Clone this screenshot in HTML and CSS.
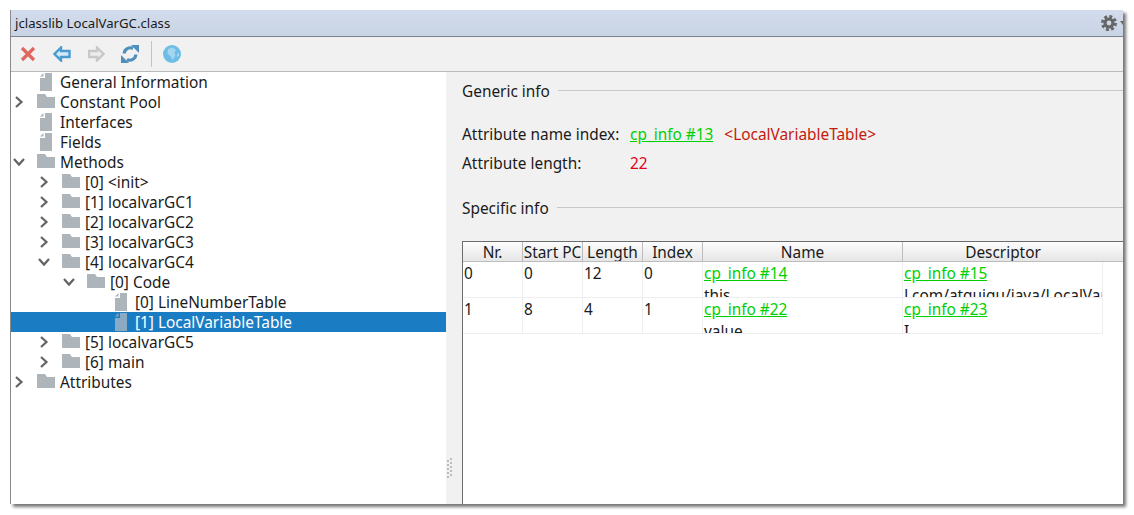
FILE: index.html
```html
<!DOCTYPE html>
<html lang="en">
<head>
    <meta charset="UTF-8">
    <title>jclasslib LocalVarGC.class</title>
    <link rel="stylesheet" href="styles.css">
</head>
<body>
    <svg class="defs" width="0" height="0">
        <symbol id="folder" viewBox="0 0 18 14"><path d="M0 0H8L10 3H18V14H0Z"/></symbol>
        <symbol id="file" viewBox="0 0 12 18"><path d="M5 0H12V18H0V5L5 5Z"/><path d="M0 3.5L3.5 0V3.5Z"/></symbol>
        <symbol id="closed" viewBox="0 0 10 14"><path d="M2 2L7.5 7L2 12" fill="none" stroke="#5f6366" stroke-width="2.2"/></symbol>
        <symbol id="open" viewBox="0 0 14 10"><path d="M2 2L7 7.5L12 2" fill="none" stroke="#5f6366" stroke-width="2.2"/></symbol>
    </svg>

    <div class="window">
        <div class="titlebar">
            <span>jclasslib LocalVarGC.class</span>
            <svg class="gear" width="16" height="16" viewBox="0 0 16 16">
                <circle cx="8" cy="8" r="4" fill="none" stroke="#666" stroke-width="3.2"/>
                <circle cx="8" cy="8" r="6.6" fill="none" stroke="#666" stroke-width="2.8" stroke-dasharray="3 2.2"/>
            </svg>
            <svg class="gear-arrow" width="3" height="5" viewBox="0 0 3 5"><path d="M0 0H3V4Z" fill="#666"/></svg>
        </div>

        <div class="toolbar">
            <svg width="16" height="16" viewBox="0 0 16 16"><path d="M2 2L14 14M14 2L2 14" stroke="#e0675d" stroke-width="3.2"/></svg>
            <svg class="tool-back" width="18" height="16" viewBox="0 0 18 16"><path d="M8 1.5L1.5 8L8 14.5V11H16.5V5H8Z" fill="#d4e8f5" stroke="#4a9bcf" stroke-width="2.4"/></svg>
            <svg class="tool-next" width="17" height="16" viewBox="0 0 17 16"><path d="M9 1.5L15.5 8L9 14.5V11H1V5H9Z" fill="#ececec" stroke="#c8c8c8" stroke-width="2.4"/></svg>
            <svg class="tool-reload" width="18" height="18" viewBox="0 0 18 18">
                <path d="M3.2 8.5A6 6 0 0 1 12 3.5M14.8 9.5A6 6 0 0 1 6 14.5" fill="none" stroke="#4f8fbc" stroke-width="3.2"/>
                <path d="M10 0H18V8ZM0 18V10L8 18Z" fill="#4f8fbc"/>
            </svg>
            <div class="tool-sep"></div>
            <svg width="18" height="18" viewBox="0 0 18 18">
                <circle cx="9" cy="9" r="9" fill="#6dbde6"/>
                <path d="M5 4L9 2.5L13 4.5L11.5 8L12.5 10.5L9.5 15L7.5 11L4.5 9ZM14 9L16 8L16 11L14 12Z" fill="#a3d6f0"/>
            </svg>
        </div>

        <div class="main">
            <div class="tree">
                <div class="row"><span class="twisty"></span><svg class="file"><use href="#file"/></svg>General Information</div>
                <div class="row"><svg class="twisty"><use href="#closed"/></svg><svg class="folder"><use href="#folder"/></svg>Constant Pool</div>
                <div class="row"><span class="twisty"></span><svg class="file"><use href="#file"/></svg>Interfaces</div>
                <div class="row"><span class="twisty"></span><svg class="file"><use href="#file"/></svg>Fields</div>
                <div class="row"><svg class="twisty twisty-open"><use href="#open"/></svg><svg class="folder"><use href="#folder"/></svg>Methods</div>
                <div class="row level1"><svg class="twisty"><use href="#closed"/></svg><svg class="folder"><use href="#folder"/></svg>[0] &lt;init&gt;</div>
                <div class="row level1"><svg class="twisty"><use href="#closed"/></svg><svg class="folder"><use href="#folder"/></svg>[1] localvarGC1</div>
                <div class="row level1"><svg class="twisty"><use href="#closed"/></svg><svg class="folder"><use href="#folder"/></svg>[2] localvarGC2</div>
                <div class="row level1"><svg class="twisty"><use href="#closed"/></svg><svg class="folder"><use href="#folder"/></svg>[3] localvarGC3</div>
                <div class="row level1"><svg class="twisty twisty-open"><use href="#open"/></svg><svg class="folder"><use href="#folder"/></svg>[4] localvarGC4</div>
                <div class="row level2"><svg class="twisty twisty-open"><use href="#open"/></svg><svg class="folder"><use href="#folder"/></svg>[0] Code</div>
                <div class="row level3"><span class="twisty"></span><svg class="file"><use href="#file"/></svg>[0] LineNumberTable</div>
                <div class="row level3 selected"><span class="twisty"></span><svg class="file"><use href="#file"/></svg>[1] LocalVariableTable</div>
                <div class="row level1"><svg class="twisty"><use href="#closed"/></svg><svg class="folder"><use href="#folder"/></svg>[5] localvarGC5</div>
                <div class="row level1"><svg class="twisty"><use href="#closed"/></svg><svg class="folder"><use href="#folder"/></svg>[6] main</div>
                <div class="row"><svg class="twisty"><use href="#closed"/></svg><svg class="folder"><use href="#folder"/></svg>Attributes</div>
            </div>

            <div class="splitter">
                <svg width="6" height="20" viewBox="0 0 6 20" fill="#bbb">
                    <rect x="0" y="2" width="2" height="2"/><rect x="0" y="6" width="2" height="2"/><rect x="0" y="10" width="2" height="2"/><rect x="0" y="14" width="2" height="2"/><rect x="0" y="18" width="2" height="2"/>
                    <rect x="3" y="0" width="2" height="2"/><rect x="3" y="4" width="2" height="2"/><rect x="3" y="8" width="2" height="2"/><rect x="3" y="12" width="2" height="2"/><rect x="3" y="16" width="2" height="2"/>
                </svg>
            </div>

            <div class="details">
                <div class="group-title group-generic"><span>Generic info</span><i></i></div>
                <div class="attr attr-name">
                    <span class="attr-label">Attribute name index:</span>
                    <a class="link" href="#">cp_info #13</a>
                    <span class="attr-ref">&lt;LocalVariableTable&gt;</span>
                </div>
                <div class="attr attr-length">
                    <span class="attr-label">Attribute length:</span>
                    <span class="attr-value">22</span>
                </div>
                <div class="group-title group-specific"><span>Specific info</span><i></i></div>

                <div class="table">
                    <div class="table-row table-head">
                        <div class="col-s">Nr.</div>
                        <div class="col-s">Start PC</div>
                        <div class="col-s">Length</div>
                        <div class="col-s">Index</div>
                        <div class="col-l">Name</div>
                        <div class="col-l col-last">Descriptor</div>
                    </div>
                    <div class="table-row">
                        <div class="col-s">0</div>
                        <div class="col-s">0</div>
                        <div class="col-s">12</div>
                        <div class="col-s">0</div>
                        <div class="col-l"><a class="link" href="#">cp_info #14</a><br>this</div>
                        <div class="col-l"><a class="link" href="#">cp_info #15</a><br>Lcom/atguigu/java/LocalVarGC;</div>
                    </div>
                    <div class="table-row">
                        <div class="col-s">1</div>
                        <div class="col-s">8</div>
                        <div class="col-s">4</div>
                        <div class="col-s">1</div>
                        <div class="col-l"><a class="link" href="#">cp_info #22</a><br>value</div>
                        <div class="col-l"><a class="link" href="#">cp_info #23</a><br>I</div>
                    </div>
                </div>
            </div>
        </div>
    </div>
</body>
</html>
```

FILE: styles.css
```css
* {
    box-sizing: border-box;
}

html, body {
    margin: 0;
    height: 515px;
    overflow: hidden;
    background-color: #fff;
}

body {
    padding: 10px 0 0 10px;
    font-family: "Noto Sans", "Open Sans", sans-serif;
    font-size: 15.4px;
    color: #1a1a1a;
}

.defs {
    position: absolute;
}

.window {
    width: 1113px;
    height: 494px;
    display: flex;
    flex-direction: column;
    border-left: 1px solid #8a8a8a;
    background-color: #f1f1f1;
    box-shadow: 3px 3px 3px #777;
}

.titlebar {
    height: 27px;
    flex: none;
    display: flex;
    align-items: center;
    padding-left: 4px;
    font-size: 13.2px;
    background: linear-gradient(#d2dcec, #c8d3e4);
    border-bottom: 1px solid #7c8494;
}

.gear {
    margin-left: auto;
}

.gear-arrow {
    margin-left: 3px;
}

.toolbar {
    height: 35px;
    flex: none;
    display: flex;
    align-items: center;
    padding-left: 9px;
    border-bottom: 1px solid #b9b9b9;
}

.tool-back {
    margin-left: 17px;
}

.tool-next {
    margin-left: 17px;
}

.tool-reload {
    margin-left: 16px;
}

.tool-sep {
    width: 1px;
    height: 26px;
    margin: 0 11px 0 12px;
    background-color: #c4c4c4;
}

.main {
    flex: 1;
    display: flex;
    min-height: 0;
}

.tree {
    width: 435px;
    flex: none;
    background-color: #fff;
}

.row {
    height: 20px;
    display: flex;
    align-items: center;
    white-space: nowrap;
    line-height: 20px;
    padding-top: 2px;
    padding-left: 3px;
}

.level1 {
    padding-left: 28px;
}

.level2 {
    padding-left: 53px;
}

.level3 {
    padding-left: 78px;
}

.twisty {
    width: 10px;
    height: 14px;
    margin-bottom: 2px;
    flex: none;
}

.twisty-open {
    width: 14px;
    height: 10px;
    margin: 0 -2px 2px;
}

.folder {
    width: 18px;
    height: 14px;
    margin: 0 5px 2px 13px;
    fill: #adb5ba;
    flex: none;
    transform: translateY(-1px);
}

.file {
    width: 12px;
    height: 18px;
    margin: 0 8px 2px 16px;
    fill: #adb5ba;
    flex: none;
}

.selected {
    background-color: #1a7dc4;
    color: #fff;
}

.selected .file {
    fill: #8aa9c2;
}

.splitter {
    width: 16px;
    flex: none;
    display: flex;
    align-items: flex-end;
    padding: 0 0 26px 1px;
}

.details {
    flex: 1;
    min-width: 0;
    display: flex;
    flex-direction: column;
}

.group-title {
    display: flex;
    align-items: center;
    height: 20px;
    gap: 8px;
}

.group-title i {
    flex: 1;
    height: 1px;
    margin-top: -2px;
    background-color: #c8c8c8;
}

.group-generic {
    margin-top: 9px;
}

.group-specific {
    margin-top: 25px;
}

.attr {
    display: flex;
    align-items: center;
    height: 20px;
}

.attr-name {
    margin-top: 23px;
}

.attr-length {
    margin-top: 9px;
}

.attr-label {
    width: 168px;
    flex: none;
}

.attr-ref {
    margin-left: 11px;
    color: #c41a0c;
}

.attr-value {
    color: #e0001a;
}

.link {
    color: #00d000;
    text-decoration: underline;
}

.table {
    margin-top: 23px;
    flex: 1;
    background-color: #fff;
    border-top: 1px solid #6c6c6c;
    border-left: 1px solid #6c6c6c;
    overflow: hidden;
}

.table-row {
    display: flex;
    height: 36px;
    line-height: 22px;
}

.table-row > div {
    height: 36px;
    overflow: hidden;
    white-space: nowrap;
    padding-top: 1px;
    padding-left: 1px;
    border-right: 1px solid #eee;
    border-bottom: 1px solid #eee;
    flex: none;
}

.col-s {
    width: 60px;
}

.col-l {
    width: 200px;
}

.table-row.table-head {
    height: 20px;
    line-height: 20px;
}

.table-row.table-head > div {
    height: 20px;
    text-align: center;
    padding-left: 0;
    background: linear-gradient(#fdfdfd, #e6e6e6);
    border-bottom: 1px solid #bdbdbd;
    border-right: 1px solid #bdbdbd;
}

.table-row.table-head > .col-last {
    width: 220px;
    padding-right: 20px;
    border-right: none;
}
```
